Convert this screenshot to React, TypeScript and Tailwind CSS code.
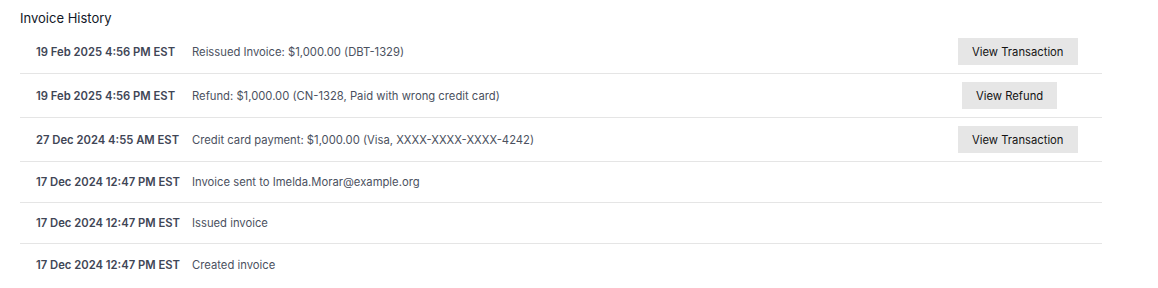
const rows = [
  { date: "19 Feb 2025 4:56 PM EST", text: "Reissued Invoice: $1,000.00 (DBT-1329)", action: "View Transaction" },
  { date: "19 Feb 2025 4:56 PM EST", text: "Refund: $1,000.00 (CN-1328, Paid with wrong credit card)", action: "View Refund" },
  { date: "27 Dec 2024 4:55 AM EST", text: "Credit card payment: $1,000.00 (Visa, XXXX-XXXX-XXXX-4242)", action: "View Transaction" },
  { date: "17 Dec 2024 12:47 PM EST", text: "Invoice sent to Imelda.Morar@example.org" },
  { date: "17 Dec 2024 12:47 PM EST", text: "Issued invoice" },
  { date: "17 Dec 2024 12:47 PM EST", text: "Created invoice" },
];

export default function App() {
  return (
    <div className="bg-white px-5 pt-2 font-['Inter',sans-serif] antialiased">
      <h2 className="mb-[2px] text-[13px] leading-5 text-[#111827]">Invoice History</h2>
      <div className="w-[1082px]">
        {rows.map((row, i) => (
          <div
            key={i}
            className={`flex items-center text-[11.25px] leading-4 ${row.action ? "h-11" : "h-[41px]"} ${
              i < rows.length - 1 ? "border-b border-[#e5e5e5]" : ""
            }`}
          >
            <div className="w-[172px] shrink-0 pl-4 font-semibold text-[#3f4656]">{row.date}</div>
            <div className="flex-1 text-[#4b5160]">{row.text}</div>
            {row.action && (
              <div className="w-[144px] shrink-0">
                <button
                  className={`h-[27px] bg-[#e6e6e6] px-[14px] text-[11.25px] text-[#141414] ${
                    row.action === "View Refund" ? "ml-1" : ""
                  }`}
                >
                  {row.action}
                </button>
              </div>
            )}
          </div>
        ))}
      </div>
    </div>
  );
}
